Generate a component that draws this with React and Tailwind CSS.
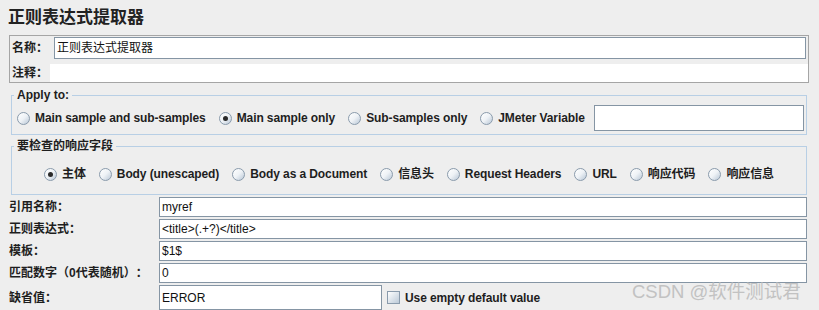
import React from "react";

const FONT = "font-['Liberation_Sans','Noto_Sans_CJK_SC',sans-serif] [text-spacing-trim:space-all]";

const Radio = ({ checked }) => (
  <span className="w-[13px] h-[13px] shrink-0 rounded-full border border-[#8a9bac] bg-gradient-to-br from-white via-[#eef2f6] to-[#b9c7d6] flex items-center justify-center">
    {checked && <span className="w-[5px] h-[5px] rounded-full bg-[#2a2a2a]" />}
  </span>
);

const RadioItem = ({ label, checked }) => (
  <div className="flex items-center gap-[5px] shrink-0">
    <Radio checked={checked} />
    <span className="text-[12px] leading-[15px] font-bold tracking-[-0.1px] text-[#1e1e1e] whitespace-nowrap">{label}</span>
  </div>
);

const Field = ({ value, className = "" }) => (
  <div className={`bg-white border border-[#8595a4] flex items-center pl-[2px] text-[12px] text-[#111] whitespace-nowrap overflow-hidden ${className}`}>
    {value}
  </div>
);

const rows = [
  ["引用名称：", "myref"],
  ["正则表达式：", "<title>(.+?)</title>"],
  ["模板：", "$1$"],
  ["匹配数字（0代表随机）：", "0"],
];

const App = () => {
  return (
    <div className={`w-[819px] h-[310px] bg-[#eeeeee] relative overflow-hidden ${FONT}`}>
      <div className="pl-[8px] pt-[7px] h-[35px] text-[17px] leading-[22px] font-bold text-[#222]">正则表达式提取器</div>

      <div className="ml-[9px] w-[800px] h-[48px] border border-[#a5a5a5] flex flex-col">
        <div className="mt-[1px] h-[22px] flex items-center">
          <span className="w-[44px] pl-[2px] text-[12px] font-bold text-[#1e1e1e]">名称：</span>
          <Field value="正则表达式提取器" className="flex-1 h-[22px] mr-[2px]" />
        </div>
        <div className="mt-[5px] h-[18px] flex items-center">
          <span className="w-[40px] pl-[2px] text-[12px] font-bold text-[#1e1e1e]">注释：</span>
          <div className="flex-1 h-[18px] bg-white" />
        </div>
      </div>

      <fieldset className="mt-[4px] ml-[11px] w-[796px] border border-[#b8cfe5] pl-[2px] pr-[2px] pt-[2px] pb-[3px]">
        <legend className="px-[3px] text-[12px] leading-[16px] font-bold text-[#1e1e1e]">Apply to:</legend>
        <div className="h-[26px] flex items-center pl-[3px]">
          <div className="flex items-center gap-[13px]">
            <RadioItem label="Main sample and sub-samples" />
            <RadioItem label="Main sample only" checked />
            <RadioItem label="Sub-samples only" />
            <RadioItem label="JMeter Variable" />
          </div>
          <Field value="" className="flex-1 h-[26px] ml-[9px]" />
        </div>
      </fieldset>

      <fieldset className="mt-[3px] ml-[11px] w-[796px] border border-[#b8cfe5] pl-[2px] pr-[2px] pt-[10px] pb-[10px]">
        <legend className="px-[3px] text-[12px] leading-[16px] font-bold text-[#1e1e1e]">要检查的响应字段</legend>
        <div className="h-[20px] flex items-center justify-center gap-[13px]">
          <RadioItem label="主体" checked />
          <RadioItem label="Body (unescaped)" />
          <RadioItem label="Body as a Document" />
          <RadioItem label="信息头" />
          <RadioItem label="Request Headers" />
          <RadioItem label="URL" />
          <RadioItem label="响应代码" />
          <RadioItem label="响应信息" />
        </div>
      </fieldset>

      <div className="mt-[2px] flex flex-col gap-[2px]">
        {rows.map(([label, value]) => (
          <div key={label} className="h-[20px] flex items-center">
            <span className="w-[159px] pl-[9px] text-[12px] font-bold text-[#1e1e1e] whitespace-nowrap">{label}</span>
            <Field value={value} className="w-[648px] h-[20px]" />
          </div>
        ))}
        <div className="h-[25px] flex items-center">
          <span className="w-[159px] pl-[9px] text-[12px] font-bold text-[#1e1e1e]">缺省值：</span>
          <Field value="ERROR" className="w-[223px] h-[25px]" />
          <span className="ml-[5px] w-[13px] h-[13px] border border-[#8a9bac] bg-gradient-to-br from-white to-[#bccad8]" />
          <span className="ml-[5px] text-[12px] font-bold tracking-[-0.1px] text-[#1e1e1e]">Use empty default value</span>
        </div>
      </div>

      <div className="absolute left-[632px] top-[280px] text-[18.5px] leading-[24px] text-[#c2c2c2] whitespace-nowrap">CSDN @软件测试君</div>
    </div>
  );
};

export default App;
